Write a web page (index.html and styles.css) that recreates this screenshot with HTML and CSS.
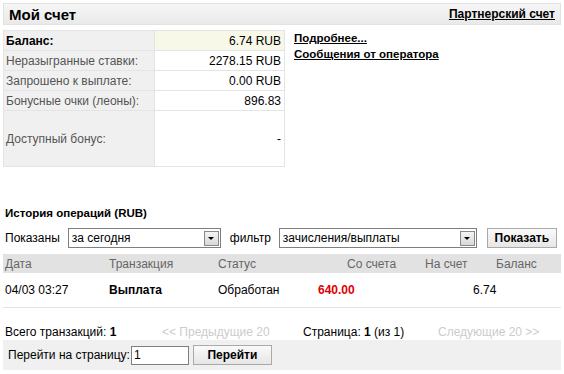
FILE: index.html
```html
<!DOCTYPE html>
<html lang="ru">
<head>
    <meta charset="UTF-8">
    <title>Мой счет</title>
    <link rel="stylesheet" href="styles.css">
</head>
<body>
    <div class="page">
        <div class="head-bar">
            <span class="head-title">Мой счет</span>
            <a href="#" class="head-link">Партнерский счет</a>
        </div>

        <div class="account">
            <table class="balance">
                <tr class="main">
                    <td class="lbl">Баланс:</td>
                    <td class="val">6.74 RUB</td>
                </tr>
                <tr>
                    <td class="lbl">Неразыгранные ставки:</td>
                    <td class="val">2278.15 RUB</td>
                </tr>
                <tr>
                    <td class="lbl">Запрошено к выплате:</td>
                    <td class="val">0.00 RUB</td>
                </tr>
                <tr>
                    <td class="lbl">Бонусные очки (леоны):</td>
                    <td class="val">896.83</td>
                </tr>
                <tr class="tall">
                    <td class="lbl">Доступный бонус:</td>
                    <td class="val">-</td>
                </tr>
            </table>
            <div class="links">
                <a href="#">Подробнее...</a>
                <a href="#">Сообщения от оператора</a>
            </div>
        </div>

        <div class="history-title">История операций (RUB)</div>
        <div class="filters">
            <span>Показаны</span>
            <div class="select sel-period">
                <span class="sel-text">за сегодня</span>
                <span class="sel-arrow"></span>
            </div>
            <span class="filter-lbl">фильтр</span>
            <div class="select sel-filter">
                <span class="sel-text">зачисления/выплаты</span>
                <span class="sel-arrow"></span>
            </div>
            <button class="btn btn-show">Показать</button>
        </div>

        <table class="ops">
            <colgroup>
                <col class="w-date">
                <col class="w-type">
                <col class="w-status">
                <col class="w-from">
                <col class="w-to">
                <col>
            </colgroup>
            <tr class="ops-head">
                <td>Дата</td>
                <td>Транзакция</td>
                <td>Статус</td>
                <td class="c-from">Со счета</td>
                <td class="c-to">На счет</td>
                <td class="c-bal">Баланс</td>
            </tr>
            <tr class="ops-row">
                <td>04/03 03:27</td>
                <td><b>Выплата</b></td>
                <td>Обработан</td>
                <td class="c-from"><b class="minus">640.00</b></td>
                <td class="c-to"></td>
                <td class="c-bal">6.74</td>
            </tr>
        </table>

        <div class="pager">
            <span class="total">Всего транзакций: <b>1</b></span>
            <span class="pg-prev">&lt;&lt; Предыдущие 20</span>
            <span class="pg-cur">Страница: <b>1</b> (из 1)</span>
            <span class="pg-next">Следующие 20 &gt;&gt;</span>
        </div>

        <div class="goto">
            <span>Перейти на страницу:</span>
            <input type="text" class="goto-input" value="1">
            <button class="btn btn-go">Перейти</button>
        </div>
    </div>
</body>
</html>
```

FILE: styles.css
```css
body {
    margin: 0;
    font-family: "Liberation Sans", Arial, sans-serif;
    font-size: 12px;
    color: #000;
    background: #fff;
}

.page {
    padding: 3px 3px 0 3px;
}

a {
    color: #000;
    font-weight: bold;
    font-size: 11.5px;
}

/* header */
.head-bar {
    display: flex;
    justify-content: space-between;
    align-items: center;
    height: 20px;
    padding: 0 5px 0 5px;
    border: 1px solid #e2e2e2;
    background: linear-gradient(#f6f6f6, #e9e9e9);
}

.head-title {
    font-size: 15px;
    font-weight: bold;
}

.head-bar .head-link {
    font-size: 12px;
}

/* balance block */
.account {
    display: flex;
    margin-top: 5px;
}

.balance {
    border-collapse: collapse;
    width: 282px;
}

.balance td {
    border: 1px solid #e4e4e4;
    height: 19px;
    padding: 0 2px;
}

.balance .lbl {
    width: 146px;
    background: #f0f0f0;
    color: #555;
}

.balance .val {
    text-align: right;
    padding-right: 3px;
}

.balance .main .lbl {
    color: #000;
    font-weight: bold;
}

.balance .main .val {
    background: #f8f8e8;
}

.balance .tall td {
    height: 55px;
}

.links {
    display: flex;
    flex-direction: column;
    gap: 4px;
    padding: 2px 0 0 9px;
}

/* history */
.history-title {
    margin-top: 40px;
    font-size: 11.5px;
    font-weight: bold;
    padding-left: 2px;
}

.filters {
    display: flex;
    align-items: center;
    margin-top: 9px;
    padding-left: 2px;
}

.select {
    display: flex;
    align-items: center;
    justify-content: space-between;
    height: 18px;
    border: 1px solid #7f7f7f;
    padding: 0 1px 0 3px;
    background: #fff;
}

.sel-period {
    width: 147px;
    margin-left: 8px;
}

.filter-lbl {
    margin-left: 9px;
}

.sel-filter {
    width: 192px;
    margin-left: 8px;
}

.sel-arrow {
    width: 15px;
    height: 15px;
    box-sizing: border-box;
    border: 1px solid #888;
    background: linear-gradient(#f4f4f4, #d8d8d8);
    position: relative;
}

.sel-arrow::after {
    content: "";
    position: absolute;
    left: 3px;
    top: 5px;
    border-left: 3px solid transparent;
    border-right: 3px solid transparent;
    border-top: 3px solid #000;
}

.btn {
    font-family: "Liberation Sans", Arial, sans-serif;
    font-size: 12px;
    font-weight: bold;
    height: 20px;
    padding: 0;
    border: 1px solid #aaa;
    background: linear-gradient(#fafafa, #e6e6e6);
    color: #000;
}

.btn-show {
    width: 70px;
    margin-left: 10px;
}

/* operations table */
.ops {
    width: 558px;
    border-collapse: collapse;
    margin-top: 6px;
    table-layout: fixed;
}

.w-date { width: 104px; }
.w-type { width: 109px; }
.w-status { width: 100px; }
.w-from { width: 80px; }
.w-to { width: 70px; }

.ops td {
    padding: 0 0 0 2px;
    text-align: left;
    white-space: nowrap;
}

.ops-head td {
    height: 19px;
    background: #e2e2e2;
    color: #666;
}

.ops-row td {
    height: 34px;
    border-bottom: 1px solid #e2e2e2;
}

.ops-head .c-from { padding-left: 31px; }
.ops-head .c-to { padding-left: 29px; }
.ops-head .c-bal { padding-left: 30px; }
.ops-row .c-bal { padding-left: 7px; }

.minus {
    color: #e00000;
}

/* pager */
.pager {
    display: flex;
    align-items: center;
    height: 16px;
    margin-top: 16px;
    padding-left: 2px;
}

.total {
    width: 157px;
}

.pg-prev,
.pg-next {
    color: #ccc;
}

.pg-prev {
    width: 141px;
}

.pg-cur {
    width: 135px;
}

.goto {
    display: flex;
    align-items: center;
    height: 30px;
    background: #f0f0f0;
    padding-left: 5px;
    width: 553px;
}

.goto-input {
    width: 52px;
    height: 17px;
    margin-left: 1px;
    padding: 0 2px;
    border: 1px solid #7f7f7f;
    font-family: "Liberation Sans", Arial, sans-serif;
    font-size: 12px;
}

.btn-go {
    width: 79px;
    margin-left: 4px;
}
```
